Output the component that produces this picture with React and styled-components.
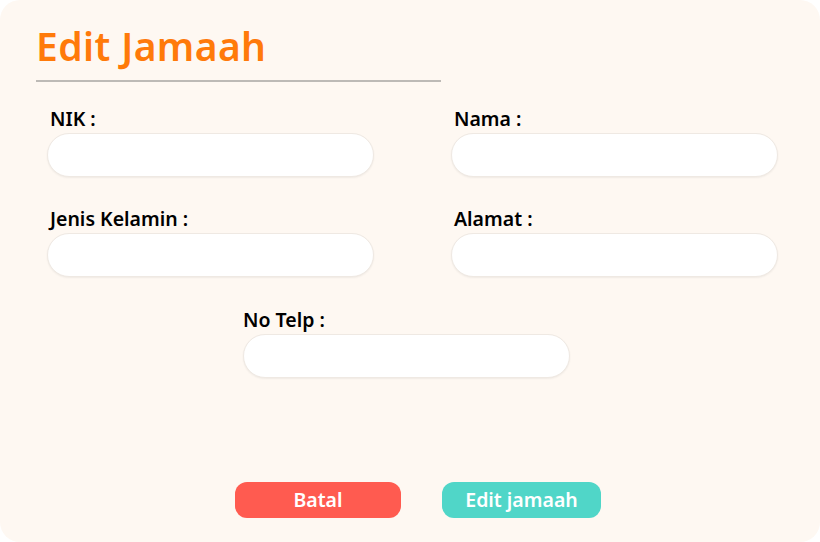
import React from "react";
import styled, { createGlobalStyle } from "styled-components";

const GlobalStyle = createGlobalStyle`
  html, body {
    margin: 0;
    padding: 0;
    background: #ffffff;
    font-family: "Noto Sans", "Lato", sans-serif;
  }
  * {
    box-sizing: border-box;
  }
`;

const fields = [
  { label: "NIK :", name: "nik" },
  { label: "Nama :", name: "nama" },
  { label: "Jenis Kelamin :", name: "jk" },
  { label: "Alamat :", name: "alamat" },
];

const App = () => {
  return (
    <>
      <GlobalStyle />
      <Card>
        <Title>Edit Jamaah</Title>
        <Divider />
        <FormGrid>
          {fields.map((f) => (
            <Field key={f.name}>
              <Label>{f.label}</Label>
              <Input type="text" name={f.name} />
            </Field>
          ))}
        </FormGrid>
        <CenterRow>
          <Field>
            <Label $inset="0px">No Telp :</Label>
            <Input type="text" name="telp" />
          </Field>
        </CenterRow>
        <ButtonRow>
          <Button color="#ff5b50" width="166px">Batal</Button>
          <Button color="#50d6c8" width="159px">Edit jamaah</Button>
        </ButtonRow>
      </Card>
    </>
  );
};

const Card = styled.div`
  width: 820px;
  height: 542px;
  background: #fef8f2;
  border-radius: 20px;
  padding: 24px 0 0 36px;
  display: flex;
  flex-direction: column;
`;

const Title = styled.h1`
  margin: 0;
  font-size: 39px;
  font-weight: 600;
  color: #ff7a0a;
  line-height: 44px;
  letter-spacing: 0.4px;
`;

const Divider = styled.div`
  width: 405px;
  height: 2px;
  background: #bdbab6;
  margin-top: 12px;
`;

const FormGrid = styled.div`
  display: grid;
  grid-template-columns: 327px 327px;
  column-gap: 77px;
  row-gap: 30px;
  margin-top: 25px;
  margin-left: 11px;
`;

const Field = styled.div`
  display: flex;
  flex-direction: column;
  width: 327px;
`;

const Label = styled.label`
  font-size: 19.5px;
  font-weight: 600;
  color: #000;
  line-height: 24px;
  padding-left: ${(p) => p.$inset || "3px"};
  margin-bottom: 2px;
`;

const Input = styled.input`
  width: 327px;
  height: 44px;
  border: 1px solid #efe9e3;
  border-radius: 22px;
  background: #fff;
  box-shadow: 0 1px 2px rgba(0, 0, 0, 0.06);
  outline: none;
  padding: 0 18px;
  font-family: inherit;
  font-size: 16px;
`;

const CenterRow = styled.div`
  display: flex;
  margin-top: 31px;
  margin-left: 207px;
`;

const ButtonRow = styled.div`
  display: flex;
  gap: 41px;
  margin-top: 104px;
  margin-left: 199px;
`;

const Button = styled.button`
  width: ${(p) => p.width};
  height: 36px;
  border: none;
  border-radius: 12px;
  background: ${(p) => p.color};
  color: #fff;
  font-family: inherit;
  font-size: 19.5px;
  font-weight: 600;
  line-height: 36px;
  padding: 0;
  cursor: pointer;
`;

export default App;
